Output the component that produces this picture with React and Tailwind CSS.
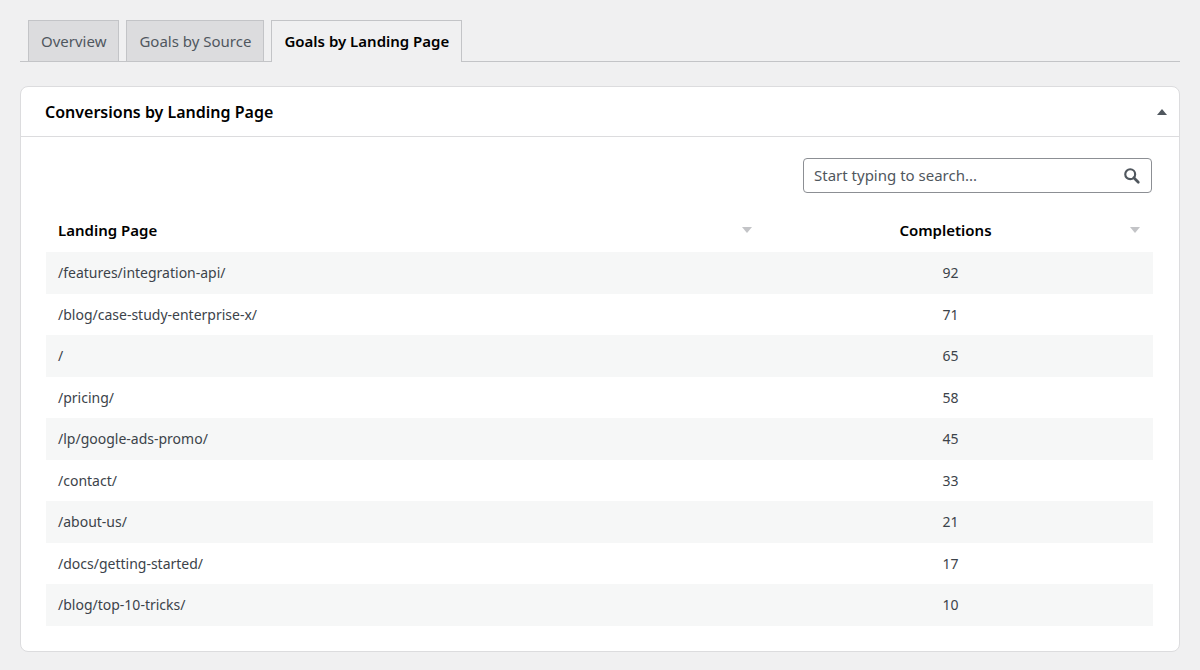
import React from 'react';

const rows = [
  ['/features/integration-api/', 92],
  ['/blog/case-study-enterprise-x/', 71],
  ['/', 65],
  ['/pricing/', 58],
  ['/lp/google-ads-promo/', 45],
  ['/contact/', 33],
  ['/about-us/', 21],
  ['/docs/getting-started/', 17],
  ['/blog/top-10-tricks/', 10],
];

const Arrow = () => (
  <svg width="10" height="6" viewBox="0 0 10 6" className="fill-[#c3c4c7]"><path d="M0 0h10L5 6z" /></svg>
);

const App = () => {
  return (
    <div className="min-h-[670px] bg-[#f0f0f1] px-5 pt-5 text-[#1d2327]" style={{ fontFamily: '"Noto Sans", sans-serif' }}>
      <div className="flex items-end gap-[7px] border-b border-[#c3c4c7] pl-2 h-[42px]">
        <div className="h-[41px] px-3 flex items-center bg-[#dcdcde] border border-b-0 border-[#c3c4c7] text-[15px] text-[#50575e]">Overview</div>
        <div className="h-[41px] px-3 flex items-center bg-[#dcdcde] border border-b-0 border-[#c3c4c7] text-[15px] text-[#50575e]">Goals by Source</div>
        <div className="h-[42px] -mb-px px-3 flex items-center bg-[#f0f0f1] border border-b-0 border-[#c3c4c7] text-[15px] font-semibold text-black">Goals by Landing Page</div>
      </div>
      <div className="mt-6 bg-white border border-[#dcdcde] rounded-lg">
        <div className="h-[50px] flex items-center justify-between pl-6 pr-3 border-b border-[#dcdcde]">
          <span className="text-[16px] font-semibold text-black">Conversions by Landing Page</span>
          <svg width="10" height="6" viewBox="0 0 10 6" className="fill-[#50575e]"><path d="M0 6h10L5 0z" /></svg>
        </div>
        <div className="px-[25px] pt-[21px] pb-[25px]">
          <div className="flex justify-end pr-[2px]">
            <div className="w-[349px] h-[35px] border border-[#8c8f94] rounded flex items-center justify-between pl-[10px] pr-[10px]">
              <span className="text-[15px] text-[#50575e]">Start typing to search...</span>
              <svg width="18" height="18" viewBox="0 0 20 20" className="text-[#50575e]"><circle cx="8" cy="8" r="5.5" fill="none" stroke="currentColor" strokeWidth="2.4" /><path d="M12 12l5 5" stroke="currentColor" strokeWidth="3" strokeLinecap="round" /></svg>
            </div>
          </div>
          <div className="mt-[15px] w-[1107px]">
            <div className="flex h-[44px] items-center text-[15px] font-semibold text-black">
              <div className="w-[711px] flex items-center justify-between pl-3 pr-[5px]">Landing Page<Arrow /></div>
              <div className="flex-1 flex items-center justify-between pr-[13px]"><span className="flex-1 text-center pl-[4px]">Completions</span><Arrow /></div>
            </div>
            {rows.map(([p, n], i) => (
              <div key={p} className={`flex h-[41.5px] items-center text-[14px] text-[#3c434a] ${i % 2 === 0 ? 'bg-[#f6f7f7]' : 'bg-white'}`}>
                <div className="w-[711px] pl-3">{p}</div>
                <div className="flex-1 text-center pr-[9px]">{n}</div>
              </div>
            ))}
          </div>
        </div>
      </div>
    </div>
  );
};

export default App;
